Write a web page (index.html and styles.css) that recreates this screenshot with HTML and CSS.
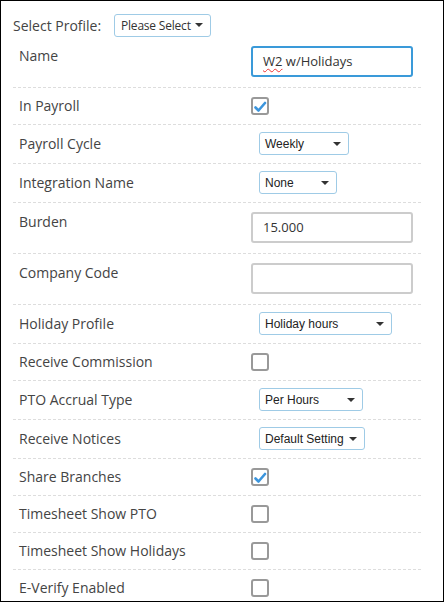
FILE: index.html
```html
<!DOCTYPE html>
<html>
<head>
<meta charset="utf-8">
<link rel="stylesheet" href="styles.css">
</head>
<body>
<div class="panel">
  <div class="header">
    <span class="header-label">Select Profile:</span>
    <div class="select select-header"><span>Please Select</span><i class="caret"></i></div>
  </div>

  <div class="row row-input">
    <div class="label">Name</div>
    <div class="field field-focus"><span class="spell">W2</span>&nbsp;w/Holidays</div>
  </div>

  <div class="row row-check">
    <div class="label">In Payroll</div>
    <div class="check checked"><svg viewBox="0 0 14 14" width="14" height="14"><path d="M2.5 7.5 L5.5 10.5 L12 3" fill="none" stroke="#3b95dd" stroke-width="2.6" stroke-linecap="round" stroke-linejoin="round"/></svg></div>
  </div>

  <div class="row row-select">
    <div class="label">Payroll Cycle</div>
    <div class="select w90"><span>Weekly</span><i class="caret"></i></div>
  </div>

  <div class="row row-select">
    <div class="label">Integration Name</div>
    <div class="select w78"><span>None</span><i class="caret"></i></div>
  </div>

  <div class="row row-input">
    <div class="label">Burden</div>
    <div class="field">15.000</div>
  </div>

  <div class="row row-input">
    <div class="label">Company Code</div>
    <div class="field"></div>
  </div>

  <div class="row row-select">
    <div class="label">Holiday Profile</div>
    <div class="select w133"><span>Holiday hours</span><i class="caret"></i></div>
  </div>

  <div class="row row-check">
    <div class="label">Receive Commission</div>
    <div class="check"></div>
  </div>

  <div class="row row-select">
    <div class="label">PTO Accrual Type</div>
    <div class="select w104"><span>Per Hours</span><i class="caret"></i></div>
  </div>

  <div class="row row-select">
    <div class="label">Receive Notices</div>
    <div class="select w106"><span>Default Setting</span><i class="caret"></i></div>
  </div>

  <div class="row row-check">
    <div class="label">Share Branches</div>
    <div class="check checked"><svg viewBox="0 0 14 14" width="14" height="14"><path d="M2.5 7.5 L5.5 10.5 L12 3" fill="none" stroke="#3b95dd" stroke-width="2.6" stroke-linecap="round" stroke-linejoin="round"/></svg></div>
  </div>

  <div class="row row-check">
    <div class="label">Timesheet Show PTO</div>
    <div class="check"></div>
  </div>

  <div class="row row-check">
    <div class="label">Timesheet Show Holidays</div>
    <div class="check"></div>
  </div>

  <div class="row row-check last">
    <div class="label">E-Verify Enabled</div>
    <div class="check"></div>
  </div>
</div>
</body>
</html>
```

FILE: styles.css
```css
* { box-sizing: border-box; }
html, body { margin: 0; padding: 0; background: #fff; }
body {
  font-family: "Open Sans", "Liberation Sans", sans-serif;
  color: #333;
}
.panel {
  width: 444px;
  height: 602px;
  border: 1px solid #000;
  padding: 12px 22px 0 12px;
  overflow: hidden;
}
.header {
  display: flex;
  align-items: center;
  height: 24px;
}
.header-label {
  font-size: 14px;
  color: #444;
  width: 101px;
  padding-top: 1px;
}
.select {
  height: 23px;
  border: 1px solid #9fcbe6;
  border-radius: 3px;
  display: flex;
  align-items: center;
  justify-content: space-between;
  padding: 0 7px 0 5px;
  font-family: "Liberation Sans", Arial, sans-serif;
  font-size: 12px;
  color: #222;
  background: #fff;
  margin-left: 8px;
  white-space: nowrap;
}
.select-header {
  margin-left: 0;
  width: 97px;
  font-family: "Open Sans", "Liberation Sans", sans-serif;
  font-size: 12px;
  letter-spacing: -0.2px;
  padding-left: 6px;
  color: #333;
}
.caret {
  width: 0;
  height: 0;
  border-left: 4px solid transparent;
  border-right: 4px solid transparent;
  border-top: 4px solid #333;
}
.w90 { width: 90px; }
.w78 { width: 78px; }
.w133 { width: 133px; }
.w104 { width: 104px; }
.w106 { width: 106px; }

.row {
  display: grid;
  grid-template-columns: 238px 1fr;
  align-items: start;
  border-bottom: 1px dashed #ddd;
}
.row.last { border-bottom: none; }
.label {
  font-size: 14px;
  line-height: 18px;
  padding-left: 6px;
  color: #444;
}
.row-input { padding: 9px 0 10px; }
.row-input .label { padding-top: 1px; }
.row-select { padding: 7px 0 8px; }
.row-select .label { padding-top: 3px; }
.row-check { padding: 9px 0 9px; }

.field {
  width: 162px;
  height: 31px;
  border: 2px solid #ccc;
  border-radius: 3px;
  padding: 0 10px;
  font-size: 13px;
  line-height: 27px;
  color: #333;
  white-space: nowrap;
}
.field-focus {
  border-color: #3a9ad9;
}
.spell {
  text-decoration: underline wavy #e33;
  text-underline-offset: 2px;
  text-decoration-thickness: 1px;
}

.check {
  width: 18px;
  height: 18px;
  border: 2px solid #999;
  border-radius: 3px;
  display: flex;
  align-items: center;
  justify-content: center;
}
.check svg { display: block; margin-top: 1px; }
```
